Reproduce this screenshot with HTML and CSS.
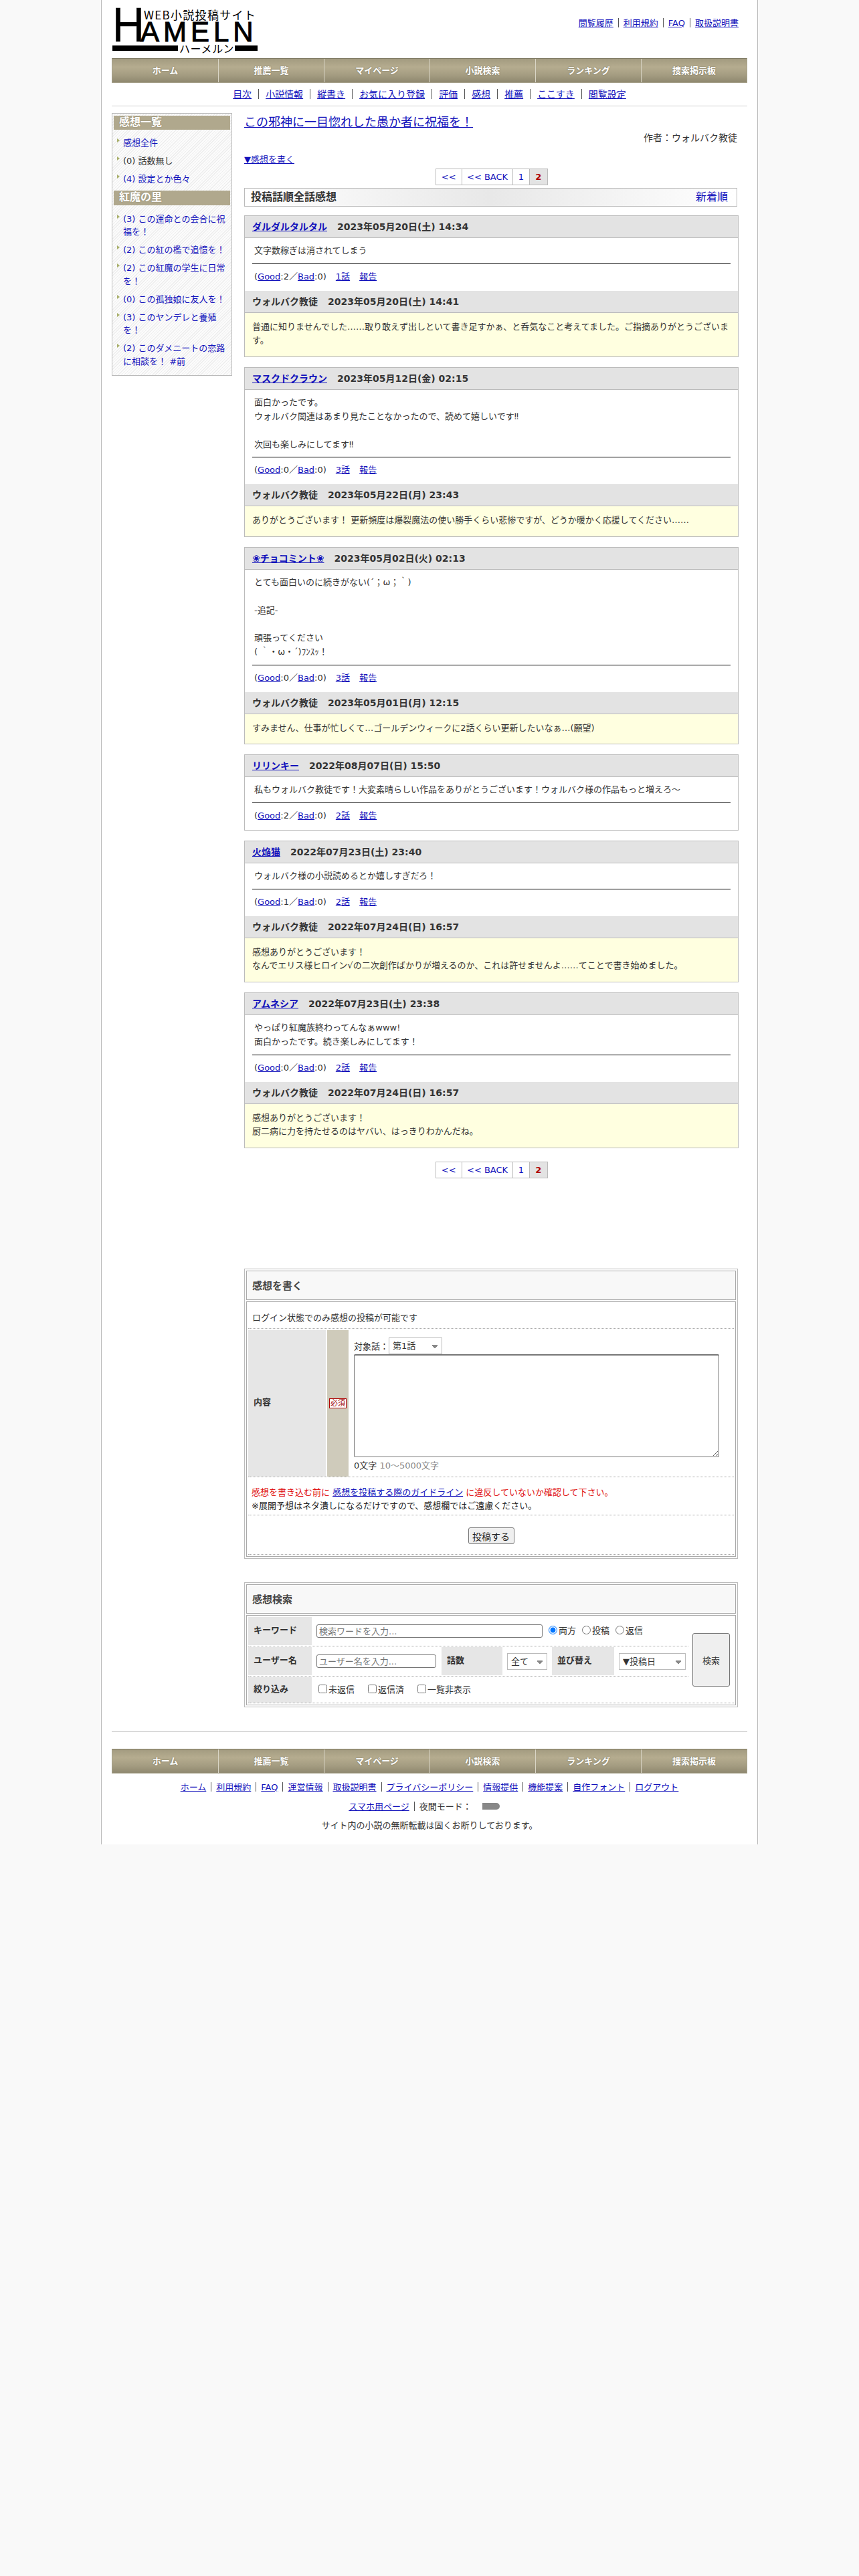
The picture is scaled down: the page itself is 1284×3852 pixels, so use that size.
FILE: index.html
```html
<!DOCTYPE html>
<html lang="ja">
<head>
    <meta charset="UTF-8">
    <title>この邪神に一目惚れした愚か者に祝福を！ - ハーメルン</title>
    <link rel="stylesheet" href="styles.css">
</head>
<body>
<div class="wrapper">
    <header class="site-header">
        <a class="logo">
            <span class="logo-h">H</span>
            <span class="logo-right">
                <span class="logo-tag">WEB小説投稿サイト</span>
                <span class="logo-name">AMELN</span>
            </span>
            <span class="logo-bottom"><i class="bar-long"></i><span>ハーメルン</span><i class="bar-short"></i></span>
        </a>
        <div class="top-links">
            <a href="#">閲覧履歴</a><i class="sep"></i><a href="#">利用規約</a><i class="sep"></i><a href="#">FAQ</a><i class="sep"></i><a href="#">取扱説明書</a>
        </div>
    </header>

    <nav class="nav">
        <a>ホーム</a><a>推薦一覧</a><a>マイページ</a><a>小説検索</a><a>ランキング</a><a>捜索掲示板</a>
    </nav>

    <div class="subnav">
        <a href="#">目次</a><i class="sep"></i><a href="#">小説情報</a><i class="sep"></i><a href="#">縦書き</a><i class="sep"></i><a href="#">お気に入り登録</a><i class="sep"></i><a href="#">評価</a><i class="sep"></i><a href="#">感想</a><i class="sep"></i><a href="#">推薦</a><i class="sep"></i><a href="#">ここすき</a><i class="sep"></i><a href="#">閲覧設定</a>
    </div>

    <div class="columns">
        <aside class="sidebar">
            <h3 class="side-title">感想一覧</h3>
            <ul class="side-list">
                <li><a href="#">感想全件</a></li>
                <li>(0) 話数無し</li>
                <li><a href="#">(4) 設定とか色々</a></li>
            </ul>
            <h3 class="side-title tall">紅魔の里</h3>
            <ul class="side-list second">
                <li><a href="#">(3) この運命との会合に祝福を！</a></li>
                <li><a href="#">(2) この紅の檻で追憶を！</a></li>
                <li><a href="#">(2) この紅魔の学生に日常を！</a></li>
                <li><a href="#">(0) この孤独娘に友人を！</a></li>
                <li><a href="#">(3) このヤンデレと養殖を！</a></li>
                <li><a href="#">(2) このダメニートの恋路に相談を！ #前</a></li>
            </ul>
        </aside>

        <main class="main">
            <h1 class="novel-title"><a href="#">この邪神に一目惚れした愚か者に祝福を！</a></h1>
            <p class="author">作者：ウォルバク教徒</p>
            <p class="write-link"><a href="#">▼感想を書く</a></p>

            <div class="pager">
                <a class="w39" href="#">&lt;&lt;</a><a class="w77" href="#">&lt;&lt; BACK</a><a class="w25" href="#">1</a><b class="w27">2</b>
            </div>

            <div class="order-bar">
                <span>投稿話順全話感想</span>
                <a href="#">新着順</a>
            </div>

            <article class="card">
                <div class="card-head"><a href="#">ダルダルタルタル</a><span>2023年05月20日(土) 14:34</span></div>
                <div class="card-body">
                    <p>文字数稼ぎは消されてしまう</p>
                    <hr>
                    <p class="meta">(<a href="#">Good</a>:2／<a href="#">Bad</a>:0)<a class="ep" href="#">1話</a><a class="ep" href="#">報告</a></p>
                </div>
                <div class="reply-head">ウォルバク教徒<span>2023年05月20日(土) 14:41</span></div>
                <div class="reply-body">普通に知りませんでした……取り敢えず出しといて書き足すかぁ、と呑気なこと考えてました。ご指摘ありがとうございます。</div>
            </article>

            <article class="card">
                <div class="card-head"><a href="#">マスクドクラウン</a><span>2023年05月12日(金) 02:15</span></div>
                <div class="card-body">
                    <p>面白かったです。<br>ウォルバク関連はあまり見たことなかったので、読めて嬉しいです‼<br><br>次回も楽しみにしてます‼</p>
                    <hr>
                    <p class="meta">(<a href="#">Good</a>:0／<a href="#">Bad</a>:0)<a class="ep" href="#">3話</a><a class="ep" href="#">報告</a></p>
                </div>
                <div class="reply-head">ウォルバク教徒<span>2023年05月22日(月) 23:43</span></div>
                <div class="reply-body">ありがとうございます！ 更新頻度は爆裂魔法の使い勝手くらい悲惨ですが、どうか暖かく応援してください……</div>
            </article>

            <article class="card">
                <div class="card-head"><a href="#">❀チョコミント❀</a><span>2023年05月02日(火) 02:13</span></div>
                <div class="card-body">
                    <p>とても面白いのに続きがない(´；ω；｀)<br><br>-追記-<br><br>頑張ってください<br>( ｀・ω・´)ﾌﾝｽｯ！</p>
                    <hr>
                    <p class="meta">(<a href="#">Good</a>:0／<a href="#">Bad</a>:0)<a class="ep" href="#">3話</a><a class="ep" href="#">報告</a></p>
                </div>
                <div class="reply-head">ウォルバク教徒<span>2023年05月01日(月) 12:15</span></div>
                <div class="reply-body">すみません、仕事が忙しくて…ゴールデンウィークに2話くらい更新したいなぁ…(願望)</div>
            </article>

            <article class="card">
                <div class="card-head"><a href="#">リリンキー</a><span>2022年08月07日(日) 15:50</span></div>
                <div class="card-body">
                    <p>私もウォルバク教徒です！大変素晴らしい作品をありがとうございます！ウォルバク様の作品もっと増えろ～</p>
                    <hr>
                    <p class="meta">(<a href="#">Good</a>:2／<a href="#">Bad</a>:0)<a class="ep" href="#">2話</a><a class="ep" href="#">報告</a></p>
                </div>
            </article>

            <article class="card">
                <div class="card-head"><a href="#">火焔猫</a><span>2022年07月23日(土) 23:40</span></div>
                <div class="card-body">
                    <p>ウォルバク様の小説読めるとか嬉しすぎだろ！</p>
                    <hr>
                    <p class="meta">(<a href="#">Good</a>:1／<a href="#">Bad</a>:0)<a class="ep" href="#">2話</a><a class="ep" href="#">報告</a></p>
                </div>
                <div class="reply-head">ウォルバク教徒<span>2022年07月24日(日) 16:57</span></div>
                <div class="reply-body">感想ありがとうございます！<br>なんでエリス様ヒロイン√の二次創作ばかりが増えるのか、これは許せませんよ……てことで書き始めました。</div>
            </article>

            <article class="card">
                <div class="card-head"><a href="#">アムネシア</a><span>2022年07月23日(土) 23:38</span></div>
                <div class="card-body">
                    <p>やっぱり紅魔族終わってんなぁwww!<br>面白かったです。続き楽しみにしてます！</p>
                    <hr>
                    <p class="meta">(<a href="#">Good</a>:0／<a href="#">Bad</a>:0)<a class="ep" href="#">2話</a><a class="ep" href="#">報告</a></p>
                </div>
                <div class="reply-head">ウォルバク教徒<span>2022年07月24日(日) 16:57</span></div>
                <div class="reply-body">感想ありがとうございます！<br>厨二病に力を持たせるのはヤバい、はっきりわかんだね。</div>
            </article>

            <div class="pager bottom">
                <a class="w39" href="#">&lt;&lt;</a><a class="w77" href="#">&lt;&lt; BACK</a><a class="w25" href="#">1</a><b class="w27">2</b>
            </div>

            <section class="panel write-panel">
                <h2 class="panel-title">感想を書く</h2>
                <div class="panel-box">
                    <div class="login-note">ログイン状態でのみ感想の投稿が可能です</div>
                    <div class="write-row">
                        <div class="write-label">内容</div>
                        <div class="write-req"><span class="req-badge">必須</span></div>
                        <div class="write-field">
                            <div class="target">対象話：<select class="sel sel-ep"><option>第1話</option></select></div>
                            <textarea class="comment-area"></textarea>
                            <div class="count">0文字 <span>10～5000文字</span></div>
                        </div>
                    </div>
                    <div class="notice">
                        <span class="red">感想を書き込む前に <a href="#">感想を投稿する際のガイドライン</a> に違反していないか確認して下さい。</span><br>
                        ※展開予想はネタ潰しになるだけですので、感想欄ではご遠慮ください。
                    </div>
                    <div class="submit-row"><button class="btn-post" type="button">投稿する</button></div>
                </div>
            </section>

            <section class="panel search-panel">
                <h2 class="panel-title">感想検索</h2>
                <div class="panel-box">
                    <div class="search-grid">
                        <div class="search-rows">
                            <div class="s-row h42">
                                <div class="s-label w95">キーワード</div>
                                <div class="s-cell"><input class="s-input kw" type="text" placeholder="検索ワードを入力...">
                                    <label class="radio"><input type="radio" name="t" checked>両方</label>
                                    <label class="radio"><input type="radio" name="t">投稿</label>
                                    <label class="radio"><input type="radio" name="t">返信</label>
                                </div>
                            </div>
                            <div class="s-row h42">
                                <div class="s-label w95">ユーザー名</div>
                                <div class="s-cell w194"><input class="s-input user" type="text" placeholder="ユーザー名を入力..."></div>
                                <div class="s-label w91">話数</div>
                                <div class="s-cell w74"><select class="sel sel-all"><option>全て</option></select></div>
                                <div class="s-label w93">並び替え</div>
                                <div class="s-cell"><select class="sel sel-sort"><option>▼投稿日</option></select></div>
                            </div>
                            <div class="s-row h38 last">
                                <div class="s-label w95">絞り込み</div>
                                <div class="s-cell checks">
                                    <label class="check"><input type="checkbox">未返信</label>
                                    <label class="check"><input type="checkbox">返信済</label>
                                    <label class="check"><input type="checkbox">一覧非表示</label>
                                </div>
                            </div>
                        </div>
                        <div class="search-side"><button class="btn-search" type="button">検索</button></div>
                    </div>
                </div>
            </section>
        </main>
    </div>

    <footer class="footer">
        <nav class="nav">
            <a>ホーム</a><a>推薦一覧</a><a>マイページ</a><a>小説検索</a><a>ランキング</a><a>捜索掲示板</a>
        </nav>
        <div class="foot-links">
            <a href="#">ホーム</a><i class="sep"></i><a href="#">利用規約</a><i class="sep"></i><a href="#">FAQ</a><i class="sep"></i><a href="#">運営情報</a><i class="sep"></i><a href="#">取扱説明書</a><i class="sep"></i><a href="#">プライバシーポリシー</a><i class="sep"></i><a href="#">情報提供</a><i class="sep"></i><a href="#">機能提案</a><i class="sep"></i><a href="#">自作フォント</a><i class="sep"></i><a href="#">ログアウト</a>
        </div>
        <div class="foot-links">
            <a href="#">スマホ用ページ</a><i class="sep"></i>夜間モード：<span class="toggle"></span>
        </div>
        <div class="foot-links">サイト内の小説の無断転載は固くお断りしております。</div>
    </footer>
</div>
</body>
</html>
```

FILE: styles.css
```css
body {
    margin: 0;
    background-color: #f9f9f9;
    color: #333;
    font-family: "DejaVu Sans", "Noto Sans CJK JP", sans-serif;
    font-size: 13px;
}

a {
    color: #1111bb;
}

.wrapper {
    width: 950px;
    margin: 0 auto;
    padding: 0 15px;
    background-color: #fff;
    border-left: 1px solid #bbb;
    border-right: 1px solid #bbb;
    height: 2758px;
}

/* header */
.site-header {
    display: flex;
    justify-content: space-between;
    height: 87px;
}

.logo {
    display: grid;
    grid-template-columns: 42px 177px;
    grid-template-rows: 52px 15px;
    width: 219px;
    margin: 11px 0 0 1px;
    color: #000;
    font-family: "Liberation Sans", sans-serif;
}

.logo-h {
    font-size: 72px;
    line-height: 52px;
    -webkit-text-stroke: 0.6px #000;
    transform: scaleX(0.92);
    transform-origin: left center;
}

.logo-right {
    display: flex;
    flex-direction: column;
}

.logo-tag {
    padding-left: 5px;
    font-family: "Noto Sans CJK JP", sans-serif;
    font-size: 17px;
    line-height: 21px;
    white-space: nowrap;
    letter-spacing: 1.3px;
}

.logo-name {
    font-size: 42px;
    line-height: 31px;
    letter-spacing: 6px;
    white-space: nowrap;
    -webkit-text-stroke: 1px #000;
}

.logo-bottom {
    grid-column: 1 / 3;
    display: flex;
    align-items: center;
    font-family: "Noto Sans CJK JP", sans-serif;
    font-size: 16px;
    line-height: 14px;
    letter-spacing: 0.6px;
    white-space: nowrap;
    margin-top: 3px;
}

.bar-long,
.bar-short {
    display: block;
    height: 8px;
    background-color: #000;
}

.bar-long {
    width: 98px;
    margin-right: 2px;
}

.bar-short {
    width: 34px;
    margin-left: 1px;
}

.top-links {
    padding: 26px 13px 0 0;
    line-height: 18px;
}

.sep {
    display: inline-block;
    width: 1px;
    height: 14px;
    margin: 0 7px;
    background-color: #555;
    vertical-align: -2px;
}

/* nav */
.nav {
    display: grid;
    grid-template-columns: repeat(6, 1fr);
    height: 37px;
    box-sizing: border-box;
    border: 1px solid #a5a08a;
    border-top-color: #7d7860;
    background: linear-gradient(to bottom, #a39b80, #b5ac8f 35%, #a49c81 70%, #8f886f);
}

.nav a {
    color: #fff;
    font-size: 13px;
    font-weight: bold;
    line-height: 35px;
    text-align: center;
    text-shadow: 0 0 2px #6f6a52;
    border-left: 1px solid #d9d5c6;
}

.nav a:first-child {
    border-left: none;
}

.subnav {
    height: 34px;
    border-bottom: 1px solid #ccc;
    font-size: 14px;
    line-height: 35px;
    text-align: center;
}

.subnav .sep {
    margin: 0 10px;
    height: 15px;
}

.columns {
    display: flex;
    align-items: flex-start;
    gap: 18px;
    margin-top: 10px;
}

/* sidebar */
.sidebar {
    flex: none;
    width: 174px;
    padding: 3px 2px 11px;
    border: 1px solid #bbb;
    background: repeating-linear-gradient(135deg, #eeeeee 0, #eeeeee 1px, #fbfbfb 1px, #fbfbfb 3px);
}

.side-title {
    margin: 0;
    height: 21px;
    padding-left: 8px;
    background-color: #b0a88d;
    color: #fff;
    font-size: 16px;
    line-height: 19px;
    font-weight: bold;
    text-shadow: 0 0 2px #8a8269;
}

.side-title.tall {
    height: 22px;
}

.side-list {
    list-style: none;
    margin: 0;
    padding: 10px 4px 0 5px;
    line-height: 19.5px;
}

.side-list.second {
    padding-top: 11px;
}

.side-list li {
    display: flex;
    margin-bottom: 7.5px;
}

.side-list li:last-child {
    margin-bottom: 0;
}

.side-list li::before {
    content: "";
    flex: none;
    width: 0;
    height: 0;
    margin: 3px 5px 0 0;
    border-left: 4px solid #a9b06c;
    border-top: 3px solid transparent;
    border-bottom: 3px solid transparent;
}

.side-list a {
    text-decoration: none;
}

.side-list + .side-title {
    margin-top: 7px;
}

/* main column */
.main {
    flex: none;
    width: 739px;
}

.novel-title {
    margin: 0;
    font-size: 18px;
    font-weight: normal;
    line-height: 27px;
}

.author {
    margin: 0;
    padding-right: 2px;
    font-size: 14px;
    line-height: 20px;
    text-align: right;
}

.write-link {
    margin: 13px 0 0;
    line-height: 20px;
}

.pager {
    display: flex;
    width: 168px;
    height: 25px;
    margin: 3px auto 0;
    box-sizing: border-box;
    border: 1px solid #bbb;
    line-height: 23px;
    text-align: center;
}

.pager a,
.pager b {
    text-decoration: none;
    border-left: 1px solid #bbb;
    box-sizing: border-box;
}

.pager a:first-child {
    border-left: none;
}

.pager b {
    background-color: #e3e3e3;
    color: #b00000;
}

.w39 { width: 39px; }
.w77 { width: 77px; }
.w25 { width: 25px; }
.w27 { width: 27px; }

.pager.bottom {
    margin-top: 20px;
}

.order-bar {
    display: flex;
    justify-content: space-between;
    width: 737px;
    height: 28px;
    margin-top: 4px;
    padding: 0 13px 0 9px;
    box-sizing: border-box;
    border: 1px solid #bbb;
    background: linear-gradient(to right, #fff, #e8e8e8 50%, #fff);
    font-size: 16px;
    line-height: 25px;
}

.order-bar span {
    font-weight: bold;
}

.order-bar a {
    text-decoration: none;
}

/* comment cards */
.card {
    margin-top: 15px;
    border: 1px solid #bbb;
}

.order-bar + .card {
    margin-top: 13px;
}

.card-head,
.reply-head {
    height: 32px;
    padding-left: 11px;
    background-color: #e3e3e3;
    border-bottom: 1px solid #bbb;
    font-size: 14px;
    font-weight: bold;
    line-height: 32px;
    white-space: nowrap;
}

.card-head span,
.reply-head span {
    margin-left: 15px;
}

.card-body {
    padding: 9px 11px 10px;
    line-height: 20.8px;
}

.card-body p {
    margin: 0;
    padding-left: 3px;
}

.card-body hr {
    height: 1px;
    margin: 8px 0 9px;
    border: none;
    background-color: #000;
}

.ep {
    margin-left: 14px;
}

.reply-body {
    padding: 11px 11px 13px;
    background-color: #ffffe0;
    line-height: 20.8px;
}

/* panels */
.panel {
    width: 738px;
    padding: 2px;
    box-sizing: border-box;
    border: 1px solid #bbb;
}

.write-panel {
    margin-top: 135px;
}

.search-panel {
    margin-top: 35px;
}

.panel-title {
    margin: 0 0 2px;
    height: 42px;
    padding-left: 8px;
    border: 1px solid #aaa;
    background-color: #f8f8f8;
    font-size: 15px;
    font-weight: bold;
    line-height: 44px;
    color: #444;
}

.panel-box {
    padding: 2px;
    border: 1px solid #aaa;
}

.login-note {
    height: 37px;
    padding-left: 6px;
    line-height: 44px;
    border-bottom: 1px dotted #aaa;
}

.write-row {
    display: flex;
    margin-top: 2px;
    height: 219px;
    border-bottom: 1px dotted #aaa;
}

.write-label {
    flex: none;
    width: 108px;
    padding-left: 8px;
    background-color: #e6e6e6;
    font-weight: bold;
    line-height: 216px;
}

.write-req {
    flex: none;
    width: 32px;
    margin-left: 2px;
    display: flex;
    align-items: center;
    justify-content: center;
    background-color: #cfcbbb;
}

.req-badge {
    padding: 0 1px;
    border: 1px solid #b00000;
    background-color: #fff;
    color: #a00000;
    font-size: 11px;
    line-height: 13px;
}

.write-field {
    flex: 1;
    padding: 10px 0 0 8px;
}

.target {
    display: flex;
    align-items: center;
    height: 26px;
}

.sel {
    appearance: none;
    height: 25px;
    padding: 0 4px 0 5px;
    border: 1px solid #bbb;
    border-radius: 0;
    color: #333;
    font-family: inherit;
    font-size: 13px;
    background-color: #fff;
    background-image: linear-gradient(45deg, transparent 50%, #888 50%), linear-gradient(-45deg, transparent 50%, #888 50%);
    background-size: 4px 7px;
    background-repeat: no-repeat;
    background-position: right 10px top 10px, right 6px top 10px;
}

.sel-ep { width: 80px; }
.sel-all { width: 60px; }
.sel-sort { width: 100px; }

.comment-area {
    display: block;
    width: 546px;
    height: 154px;
    margin: 0;
    padding: 0;
    box-sizing: border-box;
    border: 1px solid #767676;
    border-top-width: 2px;
    border-radius: 2px;
}

.count {
    margin-top: 3px;
    line-height: 20px;
}

.count span {
    color: #888;
}

.notice {
    height: 57px;
    padding: 13px 0 0 5px;
    box-sizing: border-box;
    line-height: 19.5px;
    border-bottom: 1px dotted #aaa;
    color: #222;
}

.red {
    color: #e01010;
}

.submit-row {
    display: flex;
    justify-content: center;
    height: 59px;
    padding-top: 18px;
    box-sizing: border-box;
    border-bottom: 1px dotted #aaa;
}

.btn-post {
    width: 69px;
    height: 25px;
    padding: 0;
    border: 1px solid #767676;
    border-radius: 3px;
    background-color: #efefef;
    color: #222;
    font-family: inherit;
    font-size: 14px;
}

/* search */
.search-grid {
    display: flex;
    border-bottom: 1px dotted #aaa;
}

.search-rows {
    flex: none;
    width: 658px;
}

.s-row {
    display: flex;
    border-bottom: 1px dotted #aaa;
    padding-bottom: 1px;
    margin-bottom: 1px;
}

.s-row.last {
    border-bottom: none;
    padding-bottom: 0;
    margin-bottom: 0;
}

.h42 { height: 42px; }
.h38 { height: 38px; }

.s-label {
    flex: none;
    padding-left: 8px;
    box-sizing: border-box;
    background-color: #e6e6e6;
    font-weight: bold;
    line-height: 40px;
}

.h38 .s-label {
    line-height: 36px;
}

.w95 { width: 95px; }
.w91 { width: 91px; }
.w93 { width: 93px; }

.s-cell {
    display: flex;
    align-items: center;
    padding-left: 7px;
    min-width: 0;
}

.w194 { width: 194px; flex: none; box-sizing: border-box; padding-right: 7px; }
.w74 { width: 74px; flex: none; box-sizing: border-box; }

.s-input {
    height: 20px;
    padding: 0 3px;
    box-sizing: border-box;
    border: 1px solid #767676;
    border-radius: 3px;
    font-family: inherit;
    font-size: 13px;
    color: #333;
}

.kw { width: 338px; }
.user { width: 179px; }

.radio {
    display: flex;
    align-items: center;
    margin-left: 9px;
    line-height: 20px;
}

.radio input {
    margin: 0 2px 3px 0;
}

.checks {
    padding-left: 10px;
}

.check {
    display: flex;
    align-items: center;
    margin-right: 20px;
    line-height: 20px;
}

.check input {
    margin: 0 2px 3px 0;
}

.search-side {
    flex: 1;
    display: flex;
    align-items: center;
    justify-content: center;
}

.btn-search {
    width: 56px;
    height: 80px;
    padding: 0;
    border: 1px solid #767676;
    border-radius: 3px;
    background-color: #efefef;
    color: #333;
    font-family: inherit;
    font-size: 13px;
}

/* footer */
.footer {
    margin-top: 36px;
    padding-top: 25px;
    border-top: 1px solid #ccc;
}

.foot-links {
    height: 28.5px;
    line-height: 28.5px;
    text-align: center;
}

.footer .nav + .foot-links {
    margin-top: 7px;
}

.toggle {
    display: inline-block;
    width: 26px;
    height: 10px;
    margin: 0 16px;
    background-color: #888;
    border-radius: 0 5px 5px 0;
}
```
